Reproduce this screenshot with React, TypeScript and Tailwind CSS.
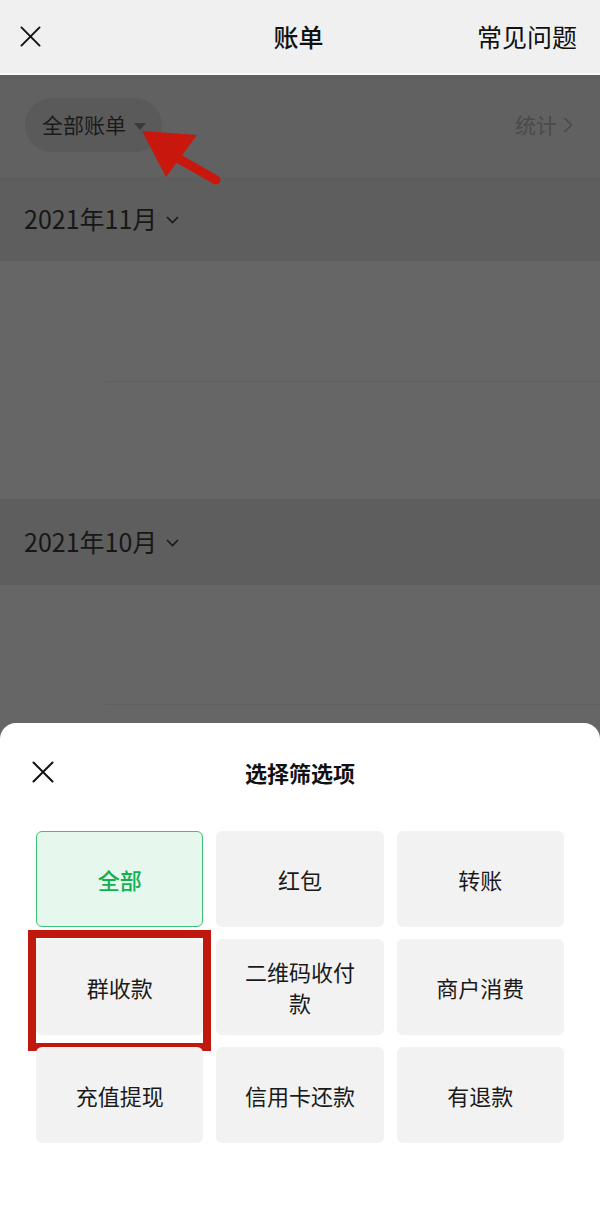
import React from 'react';

const options = [
  { label: '全部', active: true },
  { label: '红包' },
  { label: '转账' },
  { label: '群收款', marked: true },
  { label: '二维码收付款' },
  { label: '商户消费' },
  { label: '充值提现' },
  { label: '信用卡还款' },
  { label: '有退款' },
];

const Cross: React.FC<{ size: number }> = ({ size }) => (
  <svg width={size} height={size} viewBox="0 0 22 22" fill="none">
    <path d="M1.5 1.5 L20.5 20.5 M20.5 1.5 L1.5 20.5" stroke="#111" strokeWidth="2" strokeLinecap="round" />
  </svg>
);

const MonthRow: React.FC<{ label: string; h: string }> = ({ label, h }) => (
  <div className={`flex items-center pl-[24px] bg-[#5e5e5e] ${h}`}>
    <span className="text-[25px] text-[#171717]">{label}</span>
    <svg width="13" height="8" viewBox="0 0 13 8" className="ml-[9px] mt-[2px]" fill="none">
      <path d="M1 1 L6.5 6.5 L12 1" stroke="#1a1a1a" strokeWidth="1.6" />
    </svg>
  </div>
);

const App: React.FC = () => {
  return (
    <div className="relative w-[600px] h-[1232px] overflow-hidden bg-[#666666] font-['Noto_Sans_CJK_SC',sans-serif]">
      {/* top bar */}
      <div className="h-[75px] bg-[#f0f0f0] border-b-2 border-[#fbfbfb] flex items-center pl-[20px] pr-[23px]">
        <div className="w-[140px]">
          <Cross size={21} />
        </div>
        <span className="flex-1 text-center text-[25px] font-medium text-[#111]">账单</span>
        <span className="w-[140px] text-right text-[25px] text-[#111]">常见问题</span>
      </div>

      {/* filter row */}
      <div className="h-[102px] bg-[#616161] flex items-start justify-between pl-[25px] pr-[27px] pt-[23px]">
        <div className="h-[54px] rounded-full bg-[#5a5a5a] flex items-center pl-[17px] pr-[16px]">
          <span className="text-[21px] text-[#1a1a1a]">全部账单</span>
          <span className="ml-[8px] mt-[2px] w-0 h-0 border-l-[6px] border-r-[6px] border-t-[7px] border-l-transparent border-r-transparent border-t-[#3a3a3a]" />
        </div>
        <div className="h-[54px] flex items-center text-[#4a4a4a]">
          <span className="text-[21px]">统计</span>
          <svg width="10" height="16" viewBox="0 0 10 16" className="ml-[6px]" fill="none">
            <path d="M1.5 1 L8.5 8 L1.5 15" stroke="#4a4a4a" strokeWidth="1.6" />
          </svg>
        </div>
      </div>

      <MonthRow label="2021年11月" h="h-[84px]" />
      <div className="h-[238px] bg-[#666666] flex flex-col">
        <div className="h-[120px]" />
        <div className="ml-[105px] h-px bg-[#5f5f5f]" />
      </div>
      <MonthRow label="2021年10月" h="h-[86px]" />
      <div className="h-[200px] bg-[#666666] flex flex-col">
        <div className="h-[119px]" />
        <div className="ml-[105px] h-px bg-[#5f5f5f]" />
      </div>

      {/* red arrow annotation */}
      <svg className="absolute left-0 top-0" width="600" height="260" viewBox="0 0 600 260" fill="none">
        <path d="M167 152 L216 180" stroke="#c8180e" strokeWidth="9" strokeLinecap="round" />
        <polygon points="142,131 197,135 166,177" fill="#c8180e" />
      </svg>

      {/* bottom sheet */}
      <div className="absolute left-0 right-0 top-[723px] bottom-0 bg-white rounded-t-[16px]">
        <div className="relative h-[98px] flex items-center justify-center">
          <div className="absolute left-[32px] top-[38px]">
            <Cross size={22} />
          </div>
          <span className="text-[22px] font-bold text-[#111]">选择筛选项</span>
        </div>
        <div className="mt-[10px] px-[36px] grid grid-cols-3 gap-x-[13px] gap-y-[12px]">
          {options.map((o) => (
            <div key={o.label} className="relative">
              <div
                className={`h-[96px] rounded-[6px] flex items-center justify-center px-[24px] text-center text-[22px] leading-[31px] ${
                  o.active
                    ? 'bg-[#e6f8ed] border-[1.5px] border-[#3cc176] text-[#12b052] font-medium'
                    : 'bg-[#f2f2f2] text-[#1a1a1a]'
                }`}
              >
                {o.label}
              </div>
              {o.marked && (
                <div className="absolute -left-[8px] -top-[9px] w-[183px] h-[121px] border-[8px] border-[#c0180c]" />
              )}
            </div>
          ))}
        </div>
      </div>
    </div>
  );
};

export default App;
